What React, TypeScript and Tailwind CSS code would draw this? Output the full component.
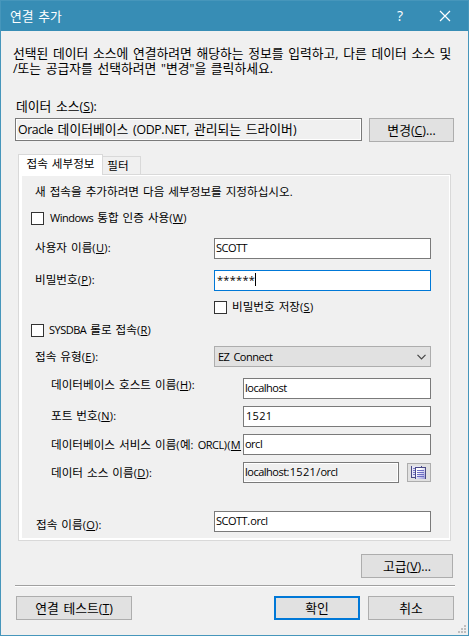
import type { ReactNode } from "react";

type TextProps = { children: string; size?: "lg" | "sm"; className?: string };

/* Mixed Hangul / Latin caption. "&X" marks the access key. */
function Text({ children, size = "sm", className = "" }: TextProps) {
  const font =
    size === "lg"
      ? "font-['Open_Sans','Noto_Sans',sans-serif] text-[12.3px]"
      : "font-['Open_Sans','Noto_Sans',sans-serif] text-[11px]";
  const tight = size === "lg" ? "tracking-[-0.4px]" : "tracking-[-0.5px]";
  const loose = size === "lg" ? "tracking-normal" : "tracking-[0.3px]";
  const base =
    size === "lg"
      ? "text-[12.8px] [word-spacing:1.8px]"
      : "text-[11.6px] [word-spacing:1.4px]";
  const parts =
    children.match(/&[A-Z]|[A-Za-z]+|[^&A-Za-z\uAC00-\uD7A3 ]+|[\uAC00-\uD7A3 ]+/g) ?? [];
  return (
    <span className={`block shrink-0 whitespace-pre leading-5 ${base} ${className}`}>
      {parts.map((p, i) =>
        p[0] === "&" ? (
          <span key={i} className={`${font} ${loose} underline decoration-1 underline-offset-1`}>
            {p.slice(1)}
          </span>
        ) : /[\uAC00-\uD7A3 ]/.test(p) ? (
          <span key={i}>{p}</span>
        ) : (
          <span key={i} className={`${font} ${/[A-Za-z]/.test(p) ? tight : loose}`}>
            {p}
          </span>
        ),
      )}
    </span>
  );
}

function Button({ children, className = "" }: { children: string; className?: string }) {
  return (
    <button
      className={`flex h-6 shrink-0 items-center justify-center border bg-[#e1e1e1] ${className}`}
    >
      <Text size="lg">{children}</Text>
    </button>
  );
}

function Field({ children, className = "" }: { children?: ReactNode; className?: string }) {
  return (
    <div className={`flex h-[21px] shrink-0 items-center border pl-px ${className}`}>
      {children}
    </div>
  );
}

function Check({ className = "" }: { className?: string }) {
  return <span className={`size-[13px] shrink-0 border border-[#333] bg-white ${className}`} />;
}

function CopyIcon() {
  return (
    <svg width="16" height="14" viewBox="0 0 16 14" shapeRendering="crispEdges">
      <defs>
        <linearGradient id="page" x1="0" y1="0" x2="1" y2="1">
          <stop offset="0.3" stopColor="#fff" />
          <stop offset="1" stopColor="#8f8fd8" />
        </linearGradient>
      </defs>
      <path d="M0 0h11v3H5v9H0z" fill="#e6e6f6" />
      <path d="M0 0h1v11h4v1H0zM10 0h1v1h-1z" fill="#4b4b86" />
      <path d="M2 2h2v1H2zM2 4h2v1H2zM2 6h2v1H2zM2 8h2v1H2z" fill="#7878c8" />
      <path d="M5 1h10v12H5z" fill="url(#page)" />
      <path d="M4 1h11v1H4zM4 1h1v12H4zM14 1h1v12h-1z" fill="#4b4b86" />
      <path d="M6 4h7v1H6zM6 6h7v1H6zM6 8h7v1H6zM6 10h7v1H6z" fill="#6e6ec4" />
    </svg>
  );
}

export default function App() {
  return (
    <div className="flex h-[636px] w-[469px] flex-col overflow-hidden border border-t-0 border-[#4696bb] bg-[#f0f0f0] font-['Noto_Sans_CJK_KR',sans-serif] text-black">
      <header className="-mx-px flex h-[31px] shrink-0 items-center border-t border-[#4696bb] bg-[#378db5] pl-[10px] text-white">
        <Text size="lg" className="-mt-px">연결 추가</Text>
        <span className="-mt-px ml-auto mr-[36px] font-['Open_Sans',sans-serif] text-[14px] leading-5">?</span>
        <svg className="-mt-px mr-[18px]" width="12" height="12" viewBox="0 0 12 12" stroke="#fff" strokeWidth="1.2">
          <path d="M1 1l10 10M11 1L1 11" />
        </svg>
      </header>

      <div className="mt-[14px] pl-[12px]">
        <Text size="lg" className="h-[15px] leading-[15px]!">
          선택된 데이터 소스에 연결하려면 해당하는 정보를 입력하고, 다른 데이터 소스 및
        </Text>
        <Text size="lg" className="h-[15px] leading-[15px]!">
          /또는 공급자를 선택하려면 "변경"을 클릭하세요.
        </Text>
      </div>

      <Text size="lg" className="mt-[21px] pl-[15px]">데이터 소스(&S):</Text>
      <div className="mt-px flex pl-[14px]">
        <Field className="h-[23px]! w-[347px] border-[#7a7a7a] shadow-[inset_0_0_0_1px_#fff]">
          <Text size="lg" className="pl-px">Oracle 데이터베이스 (ODP.NET, 관리되는 드라이버)</Text>
        </Field>
        <Button className="ml-[7px] w-[85px] border-[#adadad]">변경(&C)...</Button>
      </div>

      <div className="mt-[12px] flex h-5 items-end pl-[17px]">
        <div className="z-10 -mb-px flex h-[21px] w-[85px] justify-center border border-b-0 border-[#d9d9d9] bg-white">
          <Text className="-mt-[2px]">접속 세부정보</Text>
        </div>
        <div className="flex h-[18px] w-[38px] justify-center border border-b-0 border-l-0 border-[#d9d9d9]">
          <Text className="-mt-[2px] pr-[7px]">필터</Text>
        </div>
      </div>

      <section className="ml-[17px] h-[367px] w-[433px] shrink-0 border border-[#d9d9d9] bg-white pb-[2px] pl-[3px] pr-px pt-px">
        <div className="h-full bg-[#f0f0f0] pt-[5px]">
          <Text className="ml-[13px]">새 접속을 추가하려면 다음 세부정보를 지정하십시오.</Text>
          <div className="mt-[6px] flex h-5 items-center pl-[9px]">
            <Check />
            <Text className="-mt-[2px] ml-[6px]">Windows 통합 인증 사용(&W)</Text>
          </div>
          <div className="mt-[10px] flex h-[21px] pl-[13px]">
            <Text className="-mt-px w-[179px]">사용자 이름(&U):</Text>
            <Field className="w-[217px] border-[#7a7a7a] bg-white pb-[2px]"><Text>SCOTT</Text></Field>
          </div>
          <div className="mt-[11px] flex h-[21px] pl-[13px]">
            <Text className="-mt-px w-[179px]">비밀번호(&P):</Text>
            <Field className="w-[217px] border-[#0078d7] bg-white pb-[2px]">
              <Text className="-mt-px pl-px">******</Text>
              <span className="h-[13px] w-px bg-black" />
            </Field>
          </div>
          <div className="mt-[6px] flex h-5 items-center pl-[192px]">
            <Check />
            <Text className="-mt-[2px] ml-[5px]">비밀번호 저장(&S)</Text>
          </div>
          <div className="mt-[3px] flex h-5 items-center pl-[9px]">
            <Check />
            <Text className="-mt-[2px] ml-[5px]">SYSDBA 롤로 접속(&R)</Text>
          </div>
          <div className="mt-[6px] flex h-[21px] pl-[13px]">
            <Text className="w-[179px]">접속 유형(&E):</Text>
            <Field className="w-[217px] justify-between border-[#adadad] bg-[#e1e1e1]">
              <Text className="pl-[2px]">EZ Connect</Text>
              <svg className="mr-[4px]" width="9" height="6" viewBox="0 0 9 6" fill="none" stroke="#444" strokeWidth="1.2">
                <path d="M.5 .8l4 4 4-4" />
              </svg>
            </Field>
          </div>
          <div className="mt-[11px] flex h-[21px] pl-[29px]">
            <Text className="-mt-[4px] w-[192px]">데이터베이스 호스트 이름(&H):</Text>
            <Field className="w-[188px] border-[#7a7a7a] bg-white pb-[2px]"><Text>localhost</Text></Field>
          </div>
          <div className="mt-[7px] flex h-[21px] pl-[29px]">
            <Text className="-mt-px w-[192px]">포트 번호(&N):</Text>
            <Field className="w-[188px] border-[#7a7a7a] bg-white pb-[2px]"><Text className="pl-px">1521</Text></Field>
          </div>
          <div className="mt-[7px] flex h-[21px] pl-[29px]">
            <Text className="w-[192px] overflow-hidden">데이터베이스 서비스 이름(예: ORCL)(&M</Text>
            <Field className="w-[188px] border-[#7a7a7a] bg-white pb-[2px]"><Text>orcl</Text></Field>
          </div>
          <div className="mt-[7px] flex h-[21px] pl-[29px]">
            <Text className="w-[192px]">데이터 소스 이름(&D):</Text>
            <Field className="w-[156px] border-[#7a7a7a] pb-[2px] shadow-[inset_0_0_0_1px_#fff]"><Text>localhost:1521/orcl</Text></Field>
            <button className="ml-[8px] mt-px flex h-[19px] w-6 items-center justify-center border border-[#adadad] bg-[#e1e1e1]">
              <CopyIcon />
            </button>
          </div>
          <div className="mt-[28px] flex h-[21px] pl-[13px]">
            <Text className="mt-[3px] w-[179px] pl-px">접속 이름(&O):</Text>
            <Field className="w-[217px] border-[#7a7a7a] bg-white pb-[2px]"><Text>SCOTT.orcl</Text></Field>
          </div>
        </div>
      </section>

      <Button className="ml-[360px] mt-[13px] w-[92px] border-[#adadad]">고급(&V)...</Button>
      <hr className="ml-[14px] mt-[7px] h-[2px] w-[440px] shrink-0 border-b border-t border-b-white border-t-[#a0a0a0]" />
      <div className="mt-[9px] flex pl-[15px]">
        <Button className="w-[116px] border-[#adadad]">연결 테스트(&T)</Button>
        <Button className="ml-[142px] w-[86px] border-2 border-[#0078d7]">확인</Button>
        <Button className="ml-[8px] w-[86px] border-[#adadad]">취소</Button>
      </div>
      <svg className="ml-auto mr-[2px] mt-[5px]" width="8" height="8" viewBox="0 0 8 8" fill="#bfbfbf" shapeRendering="crispEdges">
        <path d="M6 0h2v2H6zM3 3h2v2H3zM6 3h2v2H6zM0 6h2v2H0zM3 6h2v2H3zM6 6h2v2H6z" />
      </svg>
    </div>
  );
}
